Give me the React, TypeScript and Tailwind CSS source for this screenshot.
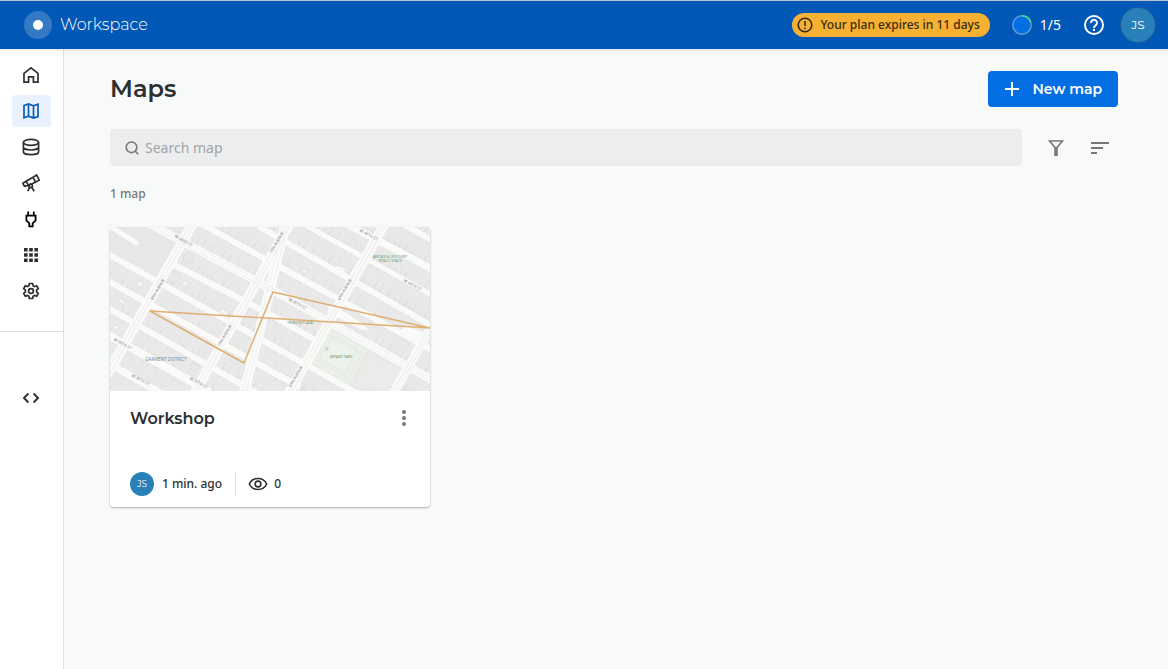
import type { ReactNode } from "react";

const body = "font-['Noto_Sans','Open_Sans',sans-serif]";
const display = "font-['Montserrat','Inter',sans-serif]";

type NavItem = { label: string; active?: boolean; icon: ReactNode };

const navItems: NavItem[] = [
  {
    label: "Home",
    icon: <path d="M2 7.300 9 1.800l7 5.500v8.900h-4.600v-5.400H6.600v5.400H2z" />,
  },
  {
    label: "Maps",
    active: true,
    icon: <path d="M2 3.500 6.500 2l5 1.800L16 2.200v12.400L11.500 16l-5-1.800L2 15.800zM6.500 2v12.200M11.500 3.800V16" />,
  },
  {
    label: "Data",
    icon: (
      <>
        <ellipse cx="9" cy="4.300" rx="7.600" ry="3" />
        <path d="M1.400 4.300v9.400c0 1.700 3.400 3 7.600 3s7.600-1.300 7.600-3V4.300M1.400 9c0 1.700 3.400 3 7.600 3s7.600-1.300 7.600-3" />
      </>
    ),
  },
  {
    label: "Explorer",
    icon: (
      <>
        <path d="m11 3.200 3.600-2.200 2.700 5.200-3.900 2zM11 3.200 4.200 7.200l2.100 4.200 7.100-3.200M4.200 7.200.9 9.300l1.500 3 3.900-.9" />
        <circle cx="8.600" cy="11.800" r="1.800" />
        <path d="m7.800 13-2 4.200M9.600 13l2.600 4.200" />
      </>
    ),
  },
  {
    label: "Connections",
    icon: (
      <path
        d="M6.200 1.500v4M11.800 1.500v4M4.400 5.600h9.200v4.800L10.700 13.300v3H7.300v-3L4.400 10.400z"
        stroke="#000"
        strokeWidth="1.800"
      />
    ),
  },
  {
    label: "Applications",
    icon: (
      <path
        d="M2 2h3.600v3.600H2zM7.200 2h3.600v3.600H7.200zM12.400 2H16v3.600h-3.600zM2 7.200h3.600v3.600H2zM7.200 7.200h3.600v3.600H7.200zM12.400 7.200H16v3.600h-3.600zM2 12.400h3.600V16H2zM7.200 12.400h3.600V16H7.200zM12.400 12.400H16V16h-3.600z"
        fill="currentColor"
        stroke="none"
      />
    ),
  },
  {
    label: "Settings",
    icon: (
      <>
        <path d="M7.400 1.500h3.200l.5 2.300 1.300.8 2.300-.8 1.600 2.800L14.600 8.200v1.600l1.700 1.600-1.600 2.800-2.300-.8-1.300.8-.5 2.300H7.400l-.5-2.300-1.300-.8-2.300.8-1.600-2.800 1.700-1.600V8.200L1.700 6.600l1.600-2.800 2.300.8 1.300-.8z" />
        <circle cx="9" cy="9" r="2.400" />
      </>
    ),
  },
];

function Icon({ children }: { children: ReactNode }) {
  return (
    <svg
      viewBox="0 0 18 18"
      className="size-[18px]"
      fill="none"
      stroke="currentColor"
      strokeWidth="1.700"
      aria-hidden="true"
    >
      {children}
    </svg>
  );
}

function Header() {
  return (
    <header className="z-10 flex h-[49px] shrink-0 items-center justify-between border-t border-[#b9c4cf] bg-[#0158b6] pr-[13px] pl-6 text-white shadow-sm">
      <a href="#home" className="flex items-center gap-2">
        <span className="flex size-7 items-center justify-center rounded-full bg-[#3479c4]">
          <span className="size-[10px] rounded-full bg-white" />
        </span>
        <span className={`${display} text-base font-light`}>Workspace</span>
      </a>
      <div className="flex items-center">
        <div className="flex h-6 items-center gap-1.5 rounded-full bg-[#f6b133] pr-2.5 pl-1 text-[#3a2c12]">
          <svg viewBox="0 0 18 18" className="size-[18px]" fill="none" stroke="currentColor" strokeWidth="1.600" aria-hidden="true">
            <circle cx="9" cy="9" r="6.800" />
            <path d="M9 5v5M9 11.400v1.800" />
          </svg>
          <span className={`${body} text-xs font-medium`}>Your plan expires in 11 days</span>
        </div>
        <div className="ml-[22px] flex items-center gap-2">
          <svg viewBox="0 0 20 20" className="size-5" aria-hidden="true">
            <circle cx="10" cy="10" r="9.200" fill="#036fe2" stroke="#6299d6" strokeWidth="1.500" />
            <path d="M10 .8a9.200 9.200 0 0 1 8.700 6.400" fill="none" stroke="#3fe08c" strokeWidth="1.600" />
          </svg>
          <span className={`${body} text-sm`}>1/5</span>
        </div>
        <button type="button" aria-label="Help" className="ml-[23px]">
          <svg viewBox="0 0 20 20" className="size-5" fill="none" stroke="currentColor" strokeWidth="2" aria-hidden="true">
            <circle cx="10" cy="10" r="9" />
            <path d="M7 8a3 3 0 1 1 4.900 2.200C10.700 11 10 11.500 10 13M10 14v2" />
          </svg>
        </button>
        <button
          type="button"
          className={`${display} ml-[17px] size-[34px] rounded-full bg-[#297fb8] text-xs ring-1 ring-[#1c5f9f]`}
        >
          JS
        </button>
      </div>
    </header>
  );
}

function Sidebar() {
  return (
    <nav className="flex w-16 shrink-0 flex-col border-r border-[#dddfe0] bg-white pt-[10px] text-[#2c3032]">
      <ul className="flex flex-col gap-1 border-b border-[#dddfe0] pb-6">
        {navItems.map((item) => (
          <li key={item.label}>
            <a
              href={`#${item.label.toLowerCase()}`}
              aria-label={item.label}
              className={`mx-3 flex h-8 items-center justify-center rounded pr-px ${
                item.active ? "bg-[#e8f1fc] text-[#0b5bb8]" : ""
              }`}
            >
              <Icon>{item.icon}</Icon>
            </a>
          </li>
        ))}
      </ul>
      <a href="#developers" aria-label="Developers" className="mx-3 mt-[50px] flex h-8 items-center justify-center pr-px">
        <Icon>
          <path d="M6.400 4.500 2 9l4.400 4.500M11.600 4.500 16 9l-4.400 4.500" strokeWidth="1.900" />
        </Icon>
      </a>
    </nav>
  );
}

// Cross streets, drawn left to right over the full width of the preview
const streets = [
  { d: "M293-3 322 13", width: 6 },
  { d: "M233-5 322 42", width: 7 },
  { d: "M190-5 322 68", width: 5 },
  { d: "M148-1 322 99", width: 6 },
  { d: "M90-4 161 35 322 123", width: 6 },
  { d: "M38-4 161 62 322 153", width: 8 },
  { d: "M-2-2 28 17", width: 5 },
  { d: "M63 37 161 88 205 113", width: 6 },
  { d: "M-2 27 161 118 250 168", width: 6 },
  { d: "M-2 54 139 132", width: 6 },
  { d: "M139 132 190 160", width: 6 },
  { d: "M-2 81 150 168", width: 6 },
  { d: "M-2 108 100 165", width: 8 },
  { d: "M-2 136 54 168", width: 7 },
];

const avenues = [
  { d: "M83-4-3 148", width: 10 },
  { d: "M180-4 84 167", width: 10 },
  { d: "M176-4 160 62 133 170", width: 10 },
  { d: "M275-4 178 168", width: 10 },
  { d: "M324 95 281 170", width: 9 },
];

const parcels = Array.from({ length: 13 }, (_, i) => `M-10 ${-204 + i * 28} L330 ${-14 + i * 28}`);

const labels = [
  { text: "W 43RD ST", x: 73, y: 15, angle: 29 },
  { text: "8TH AVENUE", x: 49, y: 63, angle: -60 },
  { text: "7TH AVENUE", x: 116, y: 109, angle: -60 },
  { text: "7TH AVENUE", x: 168, y: 16, angle: -60 },
  { text: "6TH AVENUE", x: 236, y: 63, angle: -60 },
  { text: "6TH AVENUE", x: 187, y: 150, angle: -60 },
  { text: "W 46TH ST", x: 258, y: 9, angle: 29 },
  { text: "W 44TH ST", x: 302, y: 59, angle: 29 },
  { text: "W 40TH ST", x: 187, y: 78, angle: 29 },
  { text: "W 38TH ST", x: 12, y: 118, angle: 29 },
  { text: "W 36TH ST", x: 30, y: 154, angle: 29 },
  { text: "W 37TH ST", x: 88, y: 157, angle: 29 },
];

function MapPreview() {
  return (
    <svg viewBox="0 0 320 164" className="block w-full rounded-t font-['Open_Sans',sans-serif]" role="img" aria-label="Map preview">
      <rect width="320" height="164" fill="#e9e9e9" />
      <g fill="none" stroke="#dcdcdc">
        {parcels.map((d) => (
          <g key={d}>
            <path d={d} strokeWidth="0.700" />
            <path d={d} strokeWidth="17" strokeDasharray="0.700 8 0.700 13 0.700 6" />
            <path d={d} strokeWidth="9" strokeDasharray="0.700 5 0.700 11" />
          </g>
        ))}
      </g>
      <path d="M6-5 80-5 50 52 15 33-4 24V5L27 21 30 16-4-4z" fill="#e7e7e7" />
      <path d="M221 99 296 142 281 169 253 169 200 136z" fill="#ebebea" />
      <path d="M219 102 257 123 239 157 199 134z" fill="#ebf0ea" />
      <path d="M223 109 247 122 235 146 209 131z" fill="#edf2ea" stroke="#dbe4da" strokeWidth="0.600" />
      <path d="M215 107 252 127 239 151 203 131z" fill="none" stroke="#d2dfd1" strokeDasharray="1 2" />
      <path d="M258 124 292 143 280 165 242 160z" fill="none" stroke="#d9d9d9" strokeDasharray="1 2" />
      <path d="M281 22 288 26 286 32 279 29zM-2 128 7 128 3 139-2 136z" fill="#e4eee4" />
      <circle cx="217" cy="122" r="1.800" fill="#c9d3d8" />
      <g fill="#f5f5f4" stroke="#d8d8d8" strokeWidth="0.600">
        <path d="m75 53 4 3-3 4-4-3zM111 81l7 4-2 4-6-4zM10 71l5 3-2 4-4-3zM4 98l6 2-2 3-5-2zM29 79l4 2-1 4-4-3zM193 42l5 2-2 3-4-2zM226 38l11 3-3 5-11-4z" />
        <circle cx="63" cy="50" r="6" fill="none" />
        <circle cx="30" cy="57" r="3" />
        <circle cx="78" cy="31" r="5" fill="none" />
        <circle cx="84" cy="140" r="4" fill="none" />
      </g>
      <g fill="none" stroke="#fafaf9">
        {[...streets, ...avenues].map((road) => (
          <path key={road.d} d={road.d} strokeWidth={road.width} />
        ))}
        <path d="m219 78 22 11 18 14-8-1-33-17zM295 99l22 8-6 12-22-12z" fill="#fafaf9" />
      </g>
      <g fill="none" stroke="#e6e6e6" strokeWidth="0.700">
        <path d="M81-4-5 148M85-4-1 148M178-4 82 167M182-4 86 167M273-4 176 168M277-4 180 168M323 94 280 170M326 96 283 170" />
        <path d="M174-4 158 62 131 170M178-4 162 62 135 170M38-2 161 64 322 155M38-6 161 60 322 151" strokeDasharray="2 1" />
      </g>
      <path d="M40 84 320 101 163 65 134 136z" fill="none" stroke="#dfae72" strokeWidth="1.500" strokeLinejoin="round" />
      <g fill="#77777a" fontSize="4" textAnchor="middle">
        {labels.map((l) => (
          <text key={`${l.text}-${l.x}`} transform={`translate(${l.x} ${l.y}) rotate(${l.angle})`}>
            {l.text}
          </text>
        ))}
      </g>
      <g fill="#5b9168" fontSize="3.500" textAnchor="middle">
        <text x="280" y="31">ANITA'S &amp; LEFCOURT</text>
        <text x="280" y="35">PUBLIC SPACE</text>
        <text x="190" y="97">HERSON PLAZA</text>
        <text x="231" y="131">BRYANT PARK</text>
      </g>
      <text x="56" y="134" fill="#6c87a0" fontSize="4.500" textAnchor="middle">
        GARMENT DISTRICT
      </text>
    </svg>
  );
}

function MapCard() {
  return (
    <article className="w-80 rounded bg-white shadow-[0_1px_2px_rgba(44,48,50,0.36)]">
      <MapPreview />
      <div className="px-5 pt-[15px] pb-[11px]">
        <div className="flex items-start justify-between">
          <h2 className={`${display} text-base leading-[26px] font-semibold text-[#2c3032]`}>Workshop</h2>
          <button type="button" aria-label="Map options" className="px-1 pt-1 text-[#757778]">
            <svg viewBox="0 0 4 16" className="h-4 w-1" fill="currentColor" aria-hidden="true">
              <circle cx="2" cy="2" r="2" />
              <circle cx="2" cy="8" r="2" />
              <circle cx="2" cy="14" r="2" />
            </svg>
          </button>
        </div>
        <div className={`${body} mt-10 flex h-6 items-center text-xs font-medium text-[#2c3032]`}>
          <span className={`${display} flex size-6 items-center justify-center rounded-full bg-[#297fb8] text-[9px] font-normal text-white`}>
            JS
          </span>
          <span className="ml-2">1 min. ago</span>
          <span className="ml-[13px] flex h-6 items-center gap-1.5 border-l border-[#dddfe0] pl-3">
            <svg viewBox="0 0 20 14" className="h-[14px] w-5" fill="none" stroke="currentColor" strokeWidth="1.600" aria-hidden="true">
              <path d="M1.300 7C3 3.500 6.200 1.500 10 1.500S17 3.500 18.700 7C17 10.500 13.800 12.500 10 12.500S3 10.500 1.300 7z" />
              <circle cx="10" cy="7" r="2.900" />
            </svg>
            <span>0</span>
          </span>
        </div>
      </div>
    </article>
  );
}

export default function App() {
  return (
    <div className="flex min-h-screen flex-col bg-[#f8faf9]">
      <Header />
      <div className="flex grow">
        <Sidebar />
        <main className="grow pt-[22px] pr-[50px] pl-[46px]">
          <div className="flex items-center justify-between">
            <h1 className={`${display} text-2xl font-semibold text-[#2c3032]`}>Maps</h1>
            <button
              type="button"
              className={`${display} flex h-9 items-center gap-[13px] rounded bg-[#036fe2] px-4 text-sm font-semibold text-white`}
            >
              <svg viewBox="0 0 16 16" className="size-4" stroke="currentColor" strokeWidth="2" aria-hidden="true">
                <path d="M1 8h14M8 1v14" />
              </svg>
              New map
            </button>
          </div>
          <div className="mt-[22px] flex items-center">
            <label className="flex h-[37px] grow items-center gap-1.5 rounded bg-[#ecedef] px-[15px] text-[#757778]">
              <svg viewBox="0 0 14 14" className="size-[14px]" fill="none" stroke="currentColor" strokeWidth="1.600" aria-hidden="true">
                <circle cx="6.500" cy="6.300" r="5.300" />
                <path d="m10 10 3.300 3.300" />
              </svg>
              <input
                type="search"
                aria-label="Search map"
                placeholder="Search map"
                className={`${body} grow bg-transparent text-sm outline-none placeholder:text-[#a2a4a6]`}
              />
            </label>
            <button type="button" aria-label="Filter" className="ml-[26px] text-[#757778]">
              <svg viewBox="0 0 16 16" className="size-4" fill="none" stroke="currentColor" strokeWidth="1.700" aria-hidden="true">
                <path d="M1.500 1h13L8 8.500z" />
                <path d="M8 7.500V16" strokeWidth="3.600" />
              </svg>
            </button>
            <button type="button" aria-label="Sort" className="mr-[9px] ml-[27px] text-[#757778]">
              <svg viewBox="0 0 18 14" className="h-[14px] w-[18px]" fill="currentColor" aria-hidden="true">
                <path d="M0 1h18v2H0zM0 6h12v2H0zM0 11h6v2H0z" />
              </svg>
            </button>
          </div>
          <p className={`${body} mt-[19px] mb-6 text-xs leading-[18px] font-medium text-[#757778]`}>1 map</p>
          <MapCard />
        </main>
      </div>
    </div>
  );
}
